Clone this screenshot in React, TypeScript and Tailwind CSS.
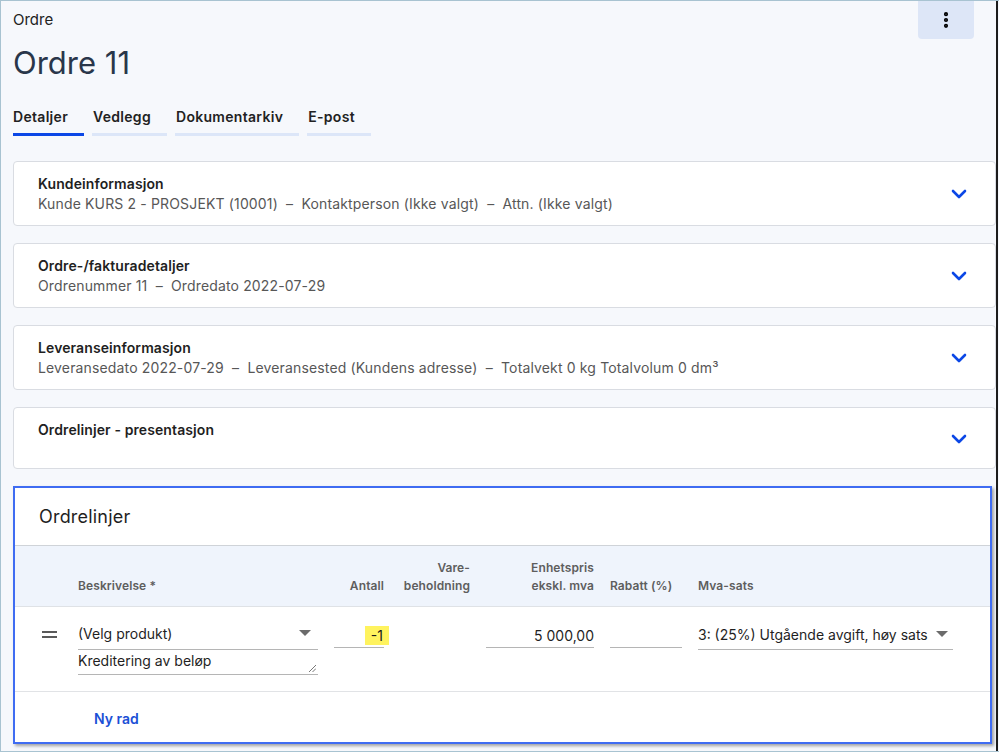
import { ChevronDown, EllipsisVertical } from "lucide-react";

const sections = [
  {
    title: "Kundeinformasjon",
    summary: "Kunde KURS 2 - PROSJEKT (10001)  –  Kontaktperson (Ikke valgt)  –  Attn. (Ikke valgt)",
  },
  { title: "Ordre-/fakturadetaljer", summary: "Ordrenummer 11  –  Ordredato 2022-07-29" },
  {
    title: "Leveranseinformasjon",
    summary: "Leveransedato 2022-07-29  –  Leveransested (Kundens adresse)  –  Totalvekt 0 kg Totalvolum 0 dm³",
  },
  { title: "Ordrelinjer - presentasjon", summary: "" },
];

const tabs = ["Detaljer", "Vedlegg", "Dokumentarkiv", "E-post"];

function Caret() {
  return (
    <svg width="12" height="6" viewBox="0 0 12 6" className="mt-[6px] shrink-0">
      <path d="M0 0h12L6 6z" fill="#6b6b6b" />
    </svg>
  );
}

function SectionCard({ title, summary }: { title: string; summary: string }) {
  return (
    <div className="flex items-center justify-between rounded-[4px] border border-[#d9dce2] bg-white pb-[11px] pl-6 pr-6 pt-3">
      <div className={summary ? "" : "min-h-[37px]"}>
        <div className="text-[14px] font-semibold leading-5 tracking-[0.1px] text-[#1f1f1f]">{title}</div>
        {summary && (
          <div className="whitespace-pre text-[14px] leading-5 tracking-[0.15px] text-[#575757]">{summary}</div>
        )}
      </div>
      <ChevronDown className="h-6 w-6 text-[#0b47e6]" strokeWidth={2.6} />
    </div>
  );
}

export default function App() {
  return (
    <div
      className="h-[752px] w-[999px] overflow-hidden border-y border-l border-[#a8c3d1] bg-[#f6f8fc]"
      style={{ fontFamily: "Inter, 'Noto Sans', sans-serif" }}
    >
      <div className="h-full w-[997px] border-r-2 border-[#1c1c1c] pl-3">
        {/* Top bar */}
        <div className="flex h-[38px] items-center justify-between">
          <span className="text-[15px] text-[#222]">Ordre</span>
          <button className="mr-[22px] flex h-[38px] w-[56px] items-center justify-center self-start rounded-b-[4px] bg-[#dde6f7]">
            <EllipsisVertical className="h-5 w-5 text-black" strokeWidth={3} />
          </button>
        </div>

        <h1 className="mt-[6px] text-[31px] font-normal leading-9 text-[#29364a]">Ordre 11</h1>

        {/* Tabs */}
        <div className="mt-[26px] flex gap-2">
          {tabs.map((t, i) => (
            <div
              key={t}
              className={
                "border-b-[3px] pb-[6px] pr-4 text-[14px] font-semibold leading-5 tracking-[0.3px] text-[#222] " +
                (i === 0 ? "border-[#0b47e6]" : "border-[#dce6f8]")
              }
            >
              <span className={i === 0 ? "" : "pl-px"}>{t}</span>
            </div>
          ))}
        </div>

        {/* Sections */}
        <div className="mt-[25px] flex flex-col gap-[17px]">
          {sections.map((s) => (
            <SectionCard key={s.title} title={s.title} summary={s.summary} />
          ))}
        </div>

        {/* Order lines */}
        <div className="mr-[4px] mt-[17px] border-2 border-[#3f6cf2] bg-white shadow-[2px_2px_3px_rgba(0,0,0,0.35)]">
          <div className="flex h-[58px] items-center border-b border-[#cfd3d8] pl-6">
            <span className="text-[18px] leading-6 tracking-[0.2px] text-[#1f1f1f]">Ordrelinjer</span>
          </div>

          {/* Table header */}
          <div className="grid h-[61px] grid-cols-[47px_240px_50px_70px_108px_72px_255px] items-end gap-x-4 border-b border-[#dfe2e6] bg-[#eff4fc] pb-[11px] text-[12px] font-semibold leading-[18px] tracking-[0.1px] text-[#5e5e5e]">
            <div />
            <div>Beskrivelse *</div>
            <div className="text-right">Antall</div>
            <div className="text-right">
              Vare-
              <br />
              beholdning
            </div>
            <div className="text-right">
              Enhetspris
              <br />
              ekskl. mva
            </div>
            <div>Rabatt (%)</div>
            <div>Mva-sats</div>
          </div>

          {/* Row */}
          <div className="grid h-[85px] grid-cols-[47px_240px_50px_70px_108px_72px_255px] gap-x-4 border-b border-[#e1e3e6] pt-[14px] text-[14px] text-[#1f1f1f]">
            <div className="flex justify-end pr-[5px] pt-[10px]">
              <div className="flex w-[15px] flex-col gap-[3px]">
                <div className="h-[2px] bg-[#5a5a5a]" />
                <div className="h-[2px] bg-[#5a5a5a]" />
              </div>
            </div>
            <div>
              <div className="flex h-[29px] items-start justify-between border-b border-[#b5b5b5] pr-[7px] pt-[3px] leading-5">
                <span>(Velg produkt)</span>
                <Caret />
              </div>
              <div className="relative h-[25px] border-b border-[#b5b5b5] leading-[21px]">
                Kreditering av beløp
                <svg width="7" height="7" viewBox="0 0 7 7" className="absolute bottom-[2px] right-[2px]">
                  <path d="M7 0L0 7M7 3.5L3.5 7" stroke="#777" strokeWidth="1" />
                </svg>
              </div>
            </div>
            <div className="flex h-[27px] items-start justify-end border-b border-[#b5b5b5] pt-[5px]">
              <span className="-mr-[5px] bg-[#fff35e] px-[6px] leading-[19px] text-[#1a1a1a]">-1</span>
            </div>
            <div />
            <div className="flex h-[27px] items-start justify-end border-b border-[#b5b5b5] pt-[5px] leading-5">5 000,00</div>
            <div className="h-[27px] border-b border-[#b5b5b5]" />
            <div className="flex h-[29px] items-start justify-between border-b border-[#b5b5b5] pr-[5px] pt-[4px] leading-5">
              <span>3: (25%) Utgående avgift, høy sats</span>
              <Caret />
            </div>
          </div>

          <div className="flex h-[50px] items-center pl-[79px] pt-[2px]">
            <span className="text-[14px] font-semibold text-[#1b4fd6]">Ny rad</span>
          </div>
        </div>
      </div>
    </div>
  );
}
